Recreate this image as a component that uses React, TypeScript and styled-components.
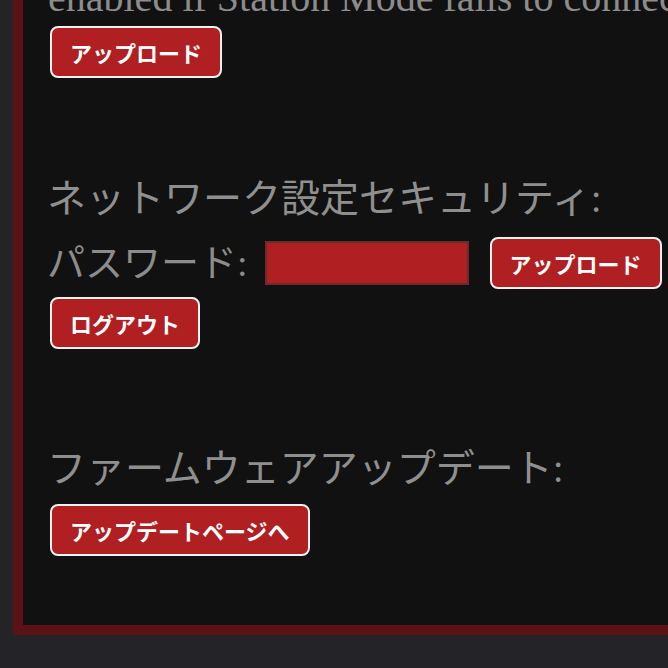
import styled, { createGlobalStyle } from "styled-components";

const GlobalStyle = createGlobalStyle`
  html, body {
    margin: 0;
    padding: 0;
    background: #242428;
    overflow: hidden;
  }
  body {
    font-family: "Liberation Serif", "Noto Sans CJK JP", serif;
  }
`;

function App() {
  return (
    <>
      <GlobalStyle />
      <Panel>
        <Note>enabled if Station Mode fails to connect.</Note>
        <Button $top={9}>アップロード</Button>

        <Heading $top={99}>ネットワーク設定セキュリティ:</Heading>
        <FieldRow>
          <Label>パスワード:</Label>
          <PasswordInput type="password" aria-label="パスワード" />
          <Button $top={0}>アップロード</Button>
        </FieldRow>
        <Button $top={8}>ログアウト</Button>

        <Heading $top={98}>ファームウェアアップデート:</Heading>
        <Button $top={13}>アップデートページへ</Button>
      </Panel>
    </>
  );
}

export default App;

const Panel = styled.div`
  box-sizing: border-box;
  width: 720px;
  margin: -31px 0 0 13px;
  padding: 0 27px 69px;
  background: #111111;
  border: 10px solid #5a1214;
  display: flex;
  flex-direction: column;
  align-items: flex-start;
`;

const Note = styled.p`
  margin: -1px 0 0 -2px;
  height: 39px;
  font-size: 40px;
  line-height: 39px;
  color: #8c8c8c;
  white-space: nowrap;
`;

const Heading = styled.h3<{ $top: number }>`
  margin: ${(p) => p.$top}px 0 0 -3px;
  font-size: 39px;
  line-height: 44px;
  font-weight: 400;
  color: #8f8f8f;
  white-space: nowrap;
`;

const FieldRow = styled.div`
  display: flex;
  align-items: center;
  margin: 16px 0 0 -3px;
  height: 52px;
`;

const Label = styled.span`
  font-size: 38px;
  line-height: 52px;
  color: #8c8c8c;
  margin-right: 17px;
  white-space: nowrap;
`;

const PasswordInput = styled.input`
  box-sizing: border-box;
  width: 204px;
  height: 44px;
  margin: 0 21px 0 0;
  padding: 0;
  background: #b01f22;
  border: 2px solid #6b2b2d;
  outline: none;
`;

const Button = styled.button<{ $top?: number }>`
  box-sizing: border-box;
  height: 52px;
  margin-top: ${(p) => p.$top ?? 8}px;
  padding: 0 18px;
  background: #b01f22;
  color: #ffffff;
  border: 2px solid #f2f2f2;
  border-radius: 8px;
  font-family: "Noto Sans CJK JP", sans-serif;
  font-size: 22px;
  font-weight: 700;
  line-height: 1;
  white-space: nowrap;
  cursor: pointer;
`;
